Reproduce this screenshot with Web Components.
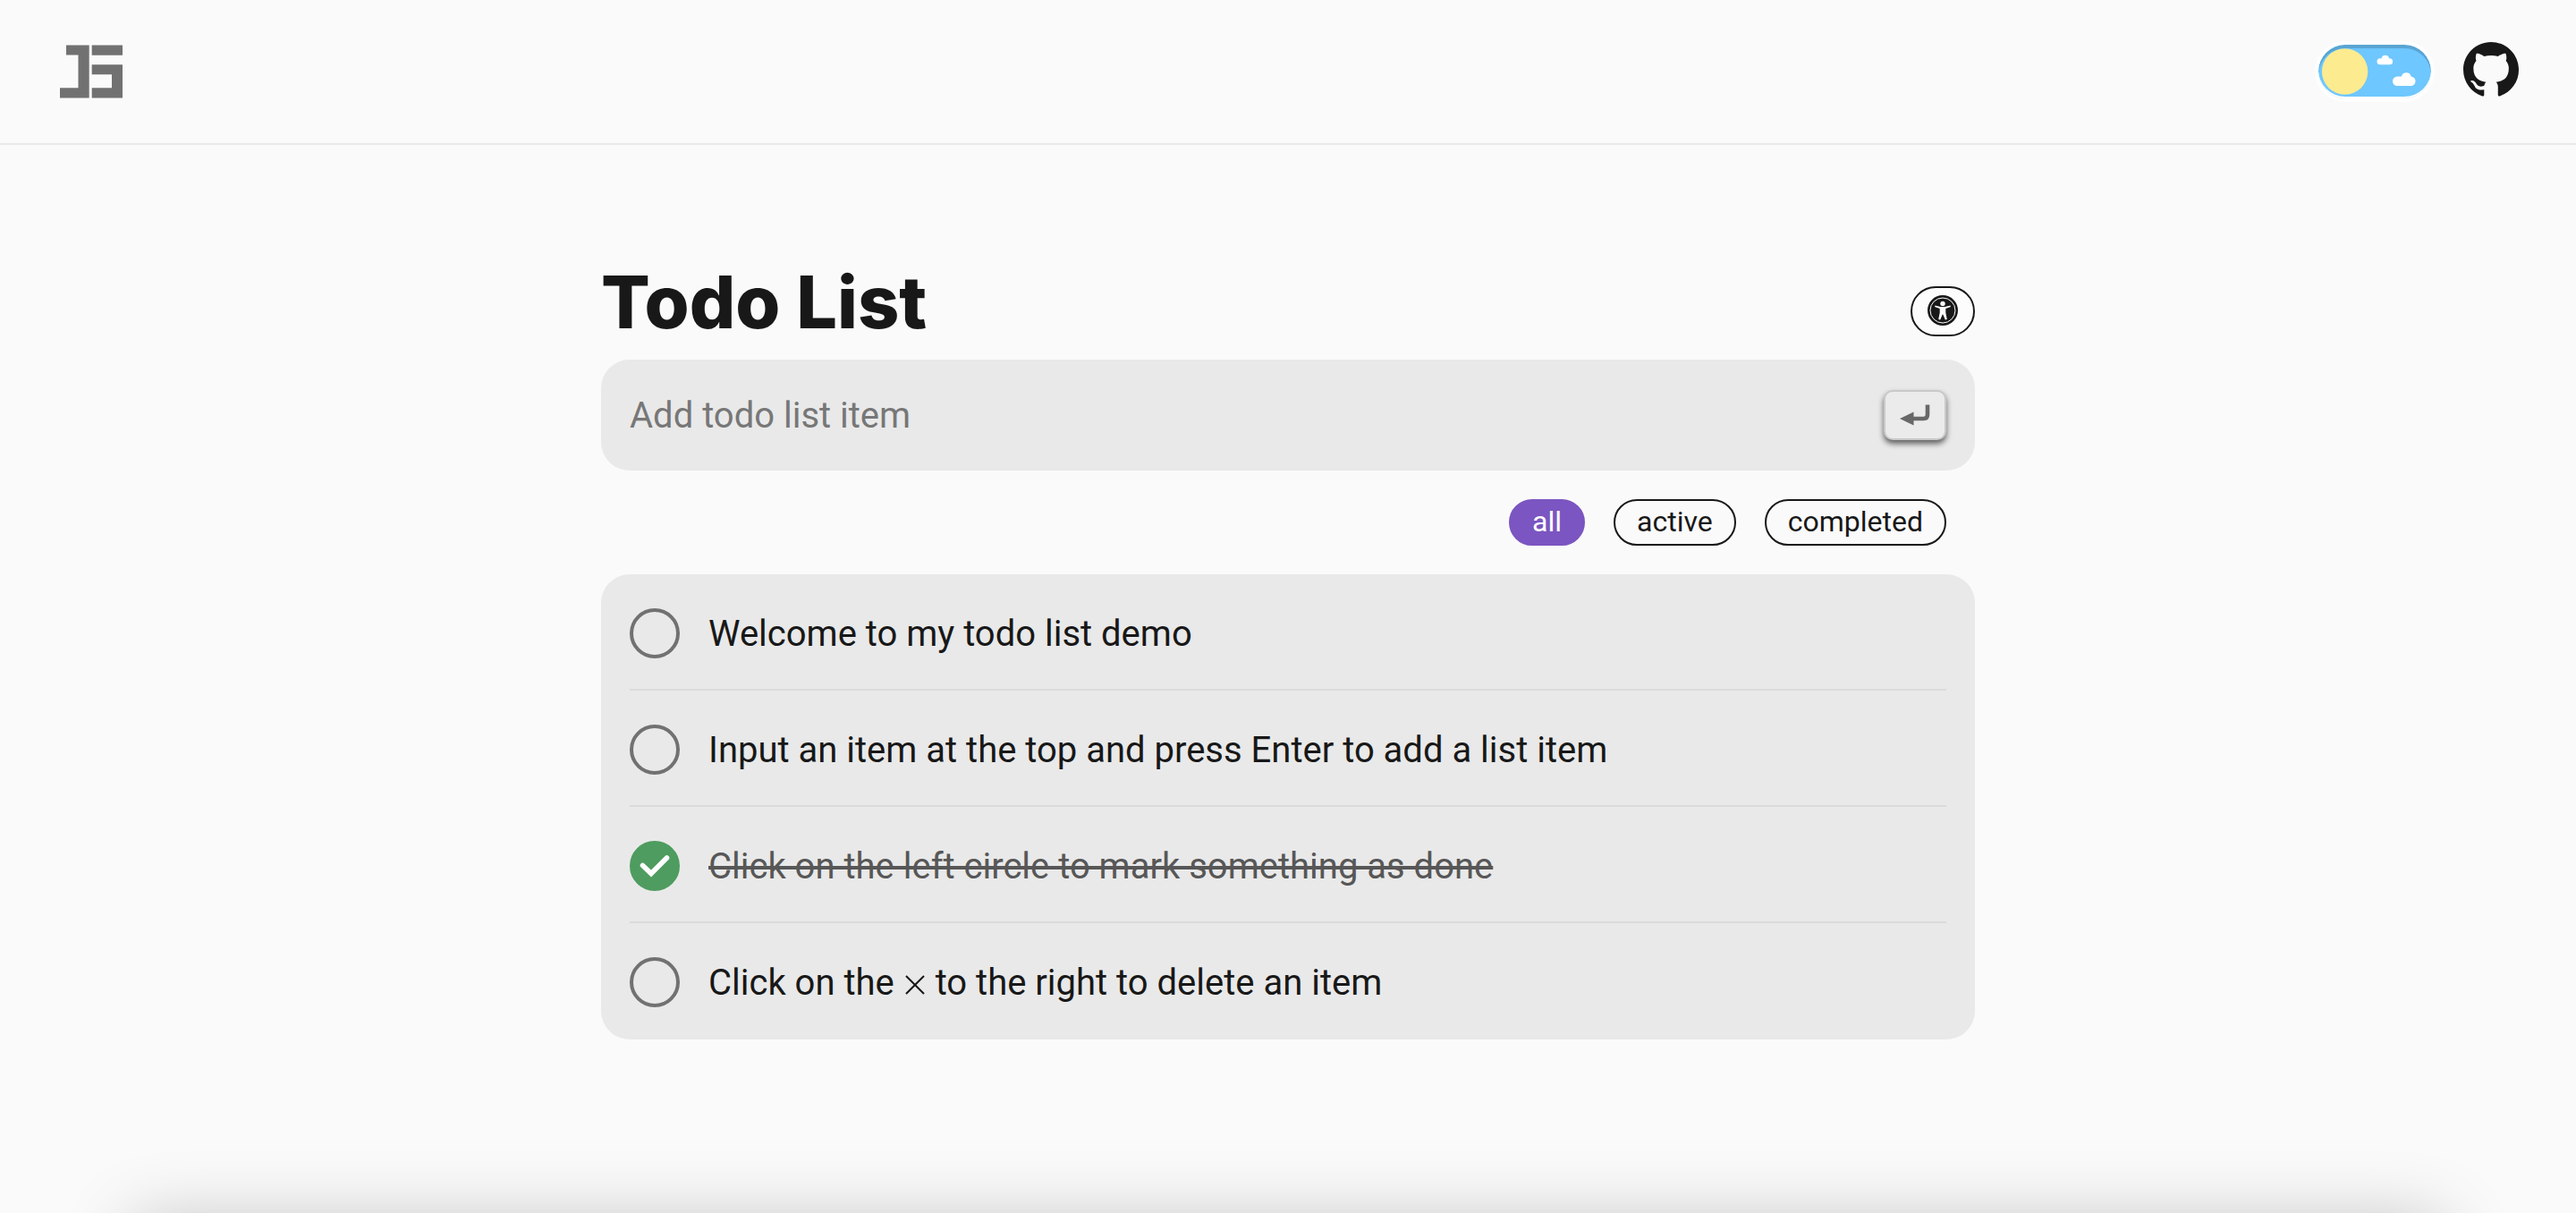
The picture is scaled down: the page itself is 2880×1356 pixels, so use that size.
<!DOCTYPE html>
<html lang="en">
<head>
<meta charset="utf-8">
<meta name="viewport" content="width=device-width, initial-scale=1">
<title>Todo List</title>
<style>
  html {
    --bg: #fafafa;
    --card: #e9e9e9;
    --line: #dbdbdb;
    --ink: #181818;
    --muted: #575757;
    --icon: #717171;
    --accent: #7b55c1;
    --done: #4e9c5f;
  }
  body {
    margin: 0;
    min-height: 100vh;
    background: var(--bg);
    color: var(--ink);
    font: 40px/58px Roboto, "Liberation Sans", sans-serif;
  }
</style>
</head>
<body>
<todo-app></todo-app>

<script>
const define = (name, html) => {
  const template = document.createElement('template');
  template.innerHTML = `<style>*{box-sizing:border-box}svg{display:block}button{font:inherit;color:inherit;cursor:pointer}</style>` + html;
  customElements.define(name, class extends HTMLElement {
    constructor() {
      super();
      this.attachShadow({ mode: 'open' }).append(template.content.cloneNode(true));
    }
    connectedCallback() {
      const root = this.shadowRoot;
      const box = root.querySelector('input[type=checkbox]');
      if (box) {
        box.checked = this.hasAttribute('done');
        box.addEventListener('change', () => this.toggleAttribute('done', box.checked));
      }
      const pill = root.querySelector('button.pill');
      if (pill) pill.setAttribute('aria-pressed', this.hasAttribute('selected'));
    }
  });
};

define('site-logo', `
<style>
  :host { display: block; }
  svg { width: 76px; height: 60px; fill: var(--icon); }
</style>
<a href="#" aria-label="Home">
  <svg viewBox="64 50 76 60" aria-hidden="true">
    <path d="M74 50.5h25.7v59H67V98.300h20.500V61.500H74zM102.700 50.500H137v11.300h-34.300zM102.700 72.200H137v37.300h-34.300V98.300H125V83.300h-22.300z"/>
  </svg>
</a>`);

define('theme-switch', `
<style>
  :host { display: block; }
  button {
    display: block; width: 134px; height: 68px; padding: 0;
    border: 4px solid #fefefe; border-radius: 34px;
    background: #6ec7fe; background-clip: padding-box;
    box-shadow: inset 0 4px 0 #5aa5d3, inset 0 -2px 0 #fefefe;
  }
  svg { width: 126px; height: 60px; }
</style>
<button type="button" role="switch" aria-checked="false" aria-label="Dark theme">
  <svg viewBox="0 0 126 60" aria-hidden="true">
    <circle cx="29.600" cy="30" r="25.700" fill="#fdeb8f"/>
    <g fill="#fff">
      <path d="M69 15.200h1.500a4.400 4.400 0 0 1 8.600 0h.500a3.500 3.500 0 0 1 0 7H69a3.500 3.500 0 0 1 0-7z"/>
      <path d="M88.200 35.500h4.600a5.600 5.600 0 0 1 10.900 0h-.4a5 5 0 0 1 0 10.500H88.200a5.250 5.250 0 0 1 0-10.500z"/>
    </g>
  </svg>
</button>`);

define('github-link', `
<style>
  :host { display: block; padding-bottom: 4px; }
  svg { width: 62px; height: 62px; fill: var(--ink); }
</style>
<a href="#github" aria-label="GitHub">
  <svg viewBox="0 0 16 16" aria-hidden="true">
    <path d="M8 0C3.580 0 0 3.580 0 8c0 3.540 2.290 6.530 5.470 7.590.4.070.55-.17.55-.38 0-.19-.01-.82-.01-1.490-2.010.37-2.530-.49-2.690-.94-.09-.23-.48-.94-.82-1.130-.28-.15-.68-.52-.01-.53.63-.01 1.080.58 1.230.82.72 1.210 1.870.87 2.330.66.07-.52.28-.87.51-1.070-1.780-.2-3.640-.89-3.640-3.950 0-.87.31-1.590.82-2.150-.08-.2-.36-1.020.08-2.120 0 0 .67-.21 2.200.82.640-.18 1.320-.27 2-.27s1.360.09 2 .27c1.530-1.040 2.200-.82 2.200-.82.44 1.100.16 1.920.08 2.120.51.56.82 1.270.82 2.150 0 3.070-1.870 3.750-3.650 3.950.29.25.54.73.54 1.480 0 1.070-.01 1.930-.01 2.200 0 .21.15.46.55.38A8.010 8.010 0 0 0 16 8c0-4.420-3.580-8-8-8z"/>
  </svg>
</a>`);

define('site-header', `
<style>
  :host { display: block; border-bottom: 2px solid var(--card); }
  header { display: flex; align-items: center; justify-content: space-between; height: 160px; padding: 0 64px; }
  nav { display: flex; align-items: center; gap: 32px; }
</style>
<header>
  <site-logo></site-logo>
  <nav aria-label="Site"><theme-switch></theme-switch><github-link></github-link></nav>
</header>`);

define('a11y-button', `
<style>
  :host { display: block; }
  button {
    display: grid; justify-items: center; align-items: start; width: 72px; height: 56px; padding: 8px 0 0;
    border: 2px solid var(--ink); border-radius: 28px; background: #fcfcfc;
  }
  svg { width: 34px; height: 34px; }
</style>
<button type="button" aria-label="Accessibility options">
  <svg viewBox="0 0 34 34" aria-hidden="true">
    <circle cx="17" cy="17" r="17" fill="#181818"/>
    <circle cx="17" cy="17" r="14" fill="none" stroke="#fcfcfc" stroke-width="1"/>
    <circle cx="17" cy="9.400" r="2.700" fill="#fcfcfc"/>
    <path d="M8.500 11.500l6 1.400h5l6-1.400.4 1.500-5.600 2v4.500l1.500 7.500-2 .6-2.500-6.100h-.6l-2.500 6.100-2-.6 1.500-7.500V15l-5.600-2z" fill="#fcfcfc"/>
  </svg>
</button>`);

define('todo-entry', `
<style>
  :host { display: block; }
  form {
    display: flex; align-items: center; gap: 32px; padding: 34px 32px;
    border-radius: 32px; background: var(--card);
  }
  input {
    flex: 1; min-width: 0; height: 56px; padding: 2px 0 0; border: 0; outline: 0;
    background: none; font: inherit; color: inherit;
  }
  input::placeholder { color: #777; opacity: 1; }
  button {
    display: grid; place-items: center; width: 70px; height: 56px; padding: 0;
    border: 2px solid #c9c9c9; border-radius: 10px; background: #ebebeb;
    box-shadow: 0 4px 6px rgba(0, 0, 0, .6);
  }
  svg { width: 34px; height: 24px; }
</style>
<form>
  <input type="text" placeholder="Add todo list item" aria-label="Add todo list item">
  <button type="button" aria-label="Add item">
    <svg viewBox="0 0 34 24" aria-hidden="true">
      <path d="M0 16l15.500-7.500v15z" fill="#686868"/>
      <path d="M14 16h12.500q4.500 0 4.500-4.500V.5" fill="none" stroke="#686868" stroke-width="4.600"/>
    </svg>
  </button>
</form>`);

define('filter-pill', `
<style>
  :host { display: block; }
  button {
    display: block; height: 52px; padding: 0 24px 2px; border: 2px solid var(--ink);
    border-radius: 26px; background: none; font-size: 32px; line-height: 46px;
  }
  :host([selected]) button { border-color: var(--accent); background: var(--accent); color: #fff; }
</style>
<button type="button" class="pill"><slot></slot></button>`);

define('todo-item', `
<style>
  :host { display: block; border-bottom: 2px solid var(--line); }
  :host(:last-of-type) { border-color: transparent; }
  label { display: flex; align-items: flex-start; gap: 32px; padding: 38px 0 32px; cursor: pointer; }
  .box { display: grid; flex: none; }
  input, svg { grid-area: 1 / 1; width: 56px; height: 56px; margin: 0; }
  input { appearance: none; border: 4px solid var(--icon); border-radius: 50%; cursor: pointer; }
  svg { visibility: hidden; pointer-events: none; }
  :host([done]) input { border-color: var(--done); background: var(--done); }
  :host([done]) svg { visibility: visible; }
  :host([done]) .text { color: var(--muted); text-decoration: line-through; text-decoration-thickness: 4px; }
</style>
<label>
  <span class="box">
    <input type="checkbox">
    <svg viewBox="0 0 56 56" aria-hidden="true">
      <path d="M14.500 27.500l9.500 9 17.500-17.500" fill="none" stroke="#fff" stroke-width="5.600" stroke-linecap="round"/>
    </svg>
  </span>
  <span class="text"><slot></slot></span>
</label>`);

define('todo-list', `
<style>
  :host { display: block; padding: 0 32px; border-radius: 32px; background: var(--card); }
</style>
<slot></slot>`);

define('page-shade', `
<style>
  :host { position: fixed; inset: auto 0 0 0; height: 90px; overflow: hidden; pointer-events: none; }
  div { height: 200px; margin: 100px 145px 0; border-radius: 20px; box-shadow: 0 0 80px rgba(0, 0, 0, .23); }
</style>
<div></div>`);

define('todo-app', `
<style>
  :host { display: block; }
  main { width: 1536px; max-width: calc(100% - 64px); margin: 0 auto; padding: 128px 0; }
  .head { display: flex; align-items: flex-end; justify-content: space-between; margin-bottom: 16px; }
  h1 { margin: 0; font: 800 81px/96px Inter, "Liberation Sans", sans-serif; }
  a11y-button { margin-bottom: 10px; }
  .filters { display: flex; justify-content: flex-end; gap: 32px; padding: 32px; }
  .cross { display: inline-block; width: 22px; height: 22px; margin: 0 2px; }
</style>
<site-header></site-header>
<main>
  <div class="head"><h1>Todo List</h1><a11y-button></a11y-button></div>
  <todo-entry></todo-entry>
  <div class="filters" role="group" aria-label="Filter">
    <filter-pill selected>all</filter-pill>
    <filter-pill>active</filter-pill>
    <filter-pill>completed</filter-pill>
  </div>
  <todo-list>
    <todo-item>Welcome to my todo list demo</todo-item>
    <todo-item>Input an item at the top and press Enter to add a list item</todo-item>
    <todo-item done>Click on the left circle to mark something as done</todo-item>
    <todo-item>Click on the <svg class="cross" viewBox="0 0 22 22" role="img" aria-label="x"><path d="M1 1l20 20M21 1L1 21" fill="none" stroke="#181818" stroke-width="2"/></svg> to the right to delete an item</todo-item>
  </todo-list>
</main>
<page-shade></page-shade>`);
</script>
</body>
</html>
